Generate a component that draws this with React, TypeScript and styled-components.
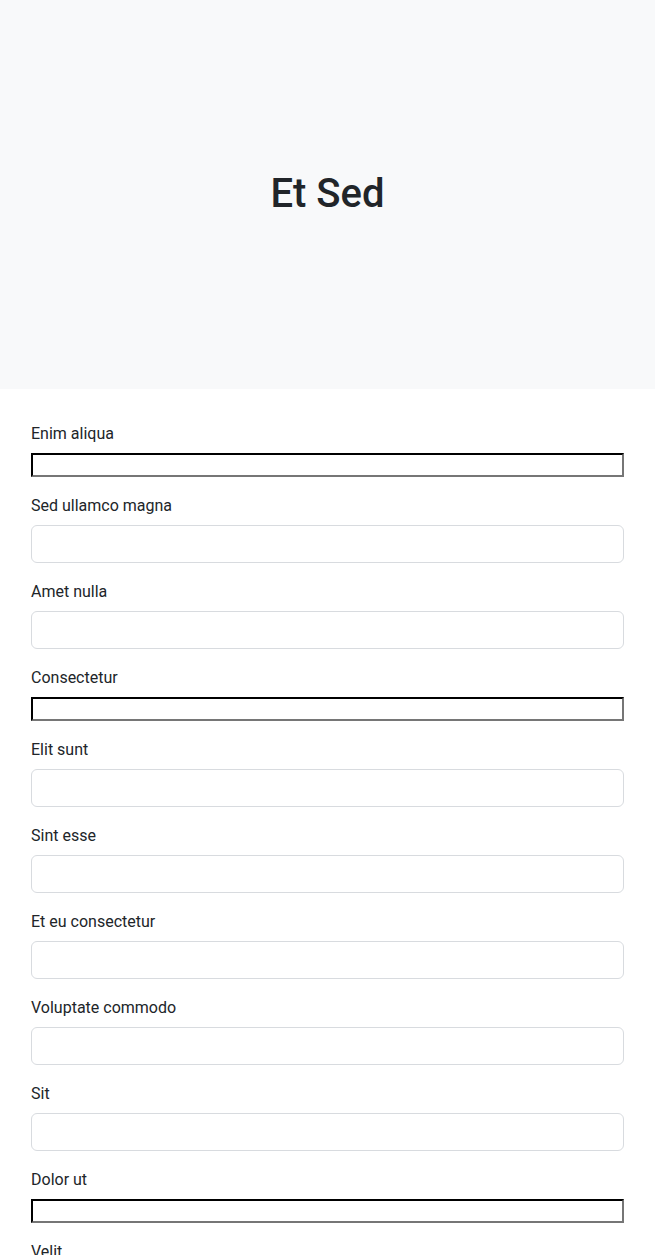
import React from "react";
import styled, { createGlobalStyle } from "styled-components";

const Global = createGlobalStyle`
  * { box-sizing: border-box; }
  html, body { margin: 0; padding: 0; }
  body {
    font-family: Roboto, "Noto Sans", "Liberation Sans", sans-serif;
    font-size: 16px;
    line-height: 1.5;
    color: #212529;
    background: #fff;
  }
`;

const Hero = styled.header`
  height: 389px;
  background: #f8f9fa;
  display: flex;
  align-items: center;
  justify-content: center;
`;

const Title = styled.h1`
  margin: 0 0 2px;
  font-size: 40px;
  font-weight: 500;
  line-height: 1.2;
  color: #212529;
`;

const Form = styled.form`
  padding: 32px 31px;
  display: flex;
  flex-direction: column;
  gap: 16px;
`;

const Field = styled.div`
  display: flex;
  flex-direction: column;
`;

const Label = styled.label`
  display: block;
  padding-top: 1px;
  margin-bottom: 7px;
  font-size: 16px;
  line-height: 24px;
`;

const PlainInput = styled.input`
  display: block;
  width: 100%;
  height: 24px;
  margin: 0;
  padding: 1px 2px;
  border: 2px inset #767676;
  border-top-color: #1f1f1f;
  border-left-color: #1f1f1f;
  border-bottom-color: #767676;
  border-right-color: #767676;
  background: #fff;
  font: inherit;
  font-size: 13px;
`;

const StyledInput = styled.input`
  display: block;
  width: 100%;
  height: 38px;
  margin: 0;
  padding: 6px 12px;
  border: 1px solid #d8dbdf;
  border-radius: 6px;
  background: #fff;
  font: inherit;
  color: #212529;
`;

type F = { label: string; plain?: boolean };

const fields: F[] = [
  { label: "Enim aliqua", plain: true },
  { label: "Sed ullamco magna" },
  { label: "Amet nulla" },
  { label: "Consectetur", plain: true },
  { label: "Elit sunt" },
  { label: "Sint esse" },
  { label: "Et eu consectetur" },
  { label: "Voluptate commodo" },
  { label: "Sit" },
  { label: "Dolor ut", plain: true },
  { label: "Velit" },
  { label: "Lorem ipsum" },
];

export default function App() {
  return (
    <>
      <Global />
      <Hero>
        <Title>Et Sed</Title>
      </Hero>
      <Form onSubmit={(e) => e.preventDefault()}>
        {fields.map((f, i) => (
          <Field key={i}>
            <Label htmlFor={`f${i}`}>{f.label}</Label>
            {f.plain ? <PlainInput id={`f${i}`} /> : <StyledInput id={`f${i}`} />}
          </Field>
        ))}
      </Form>
    </>
  );
}
